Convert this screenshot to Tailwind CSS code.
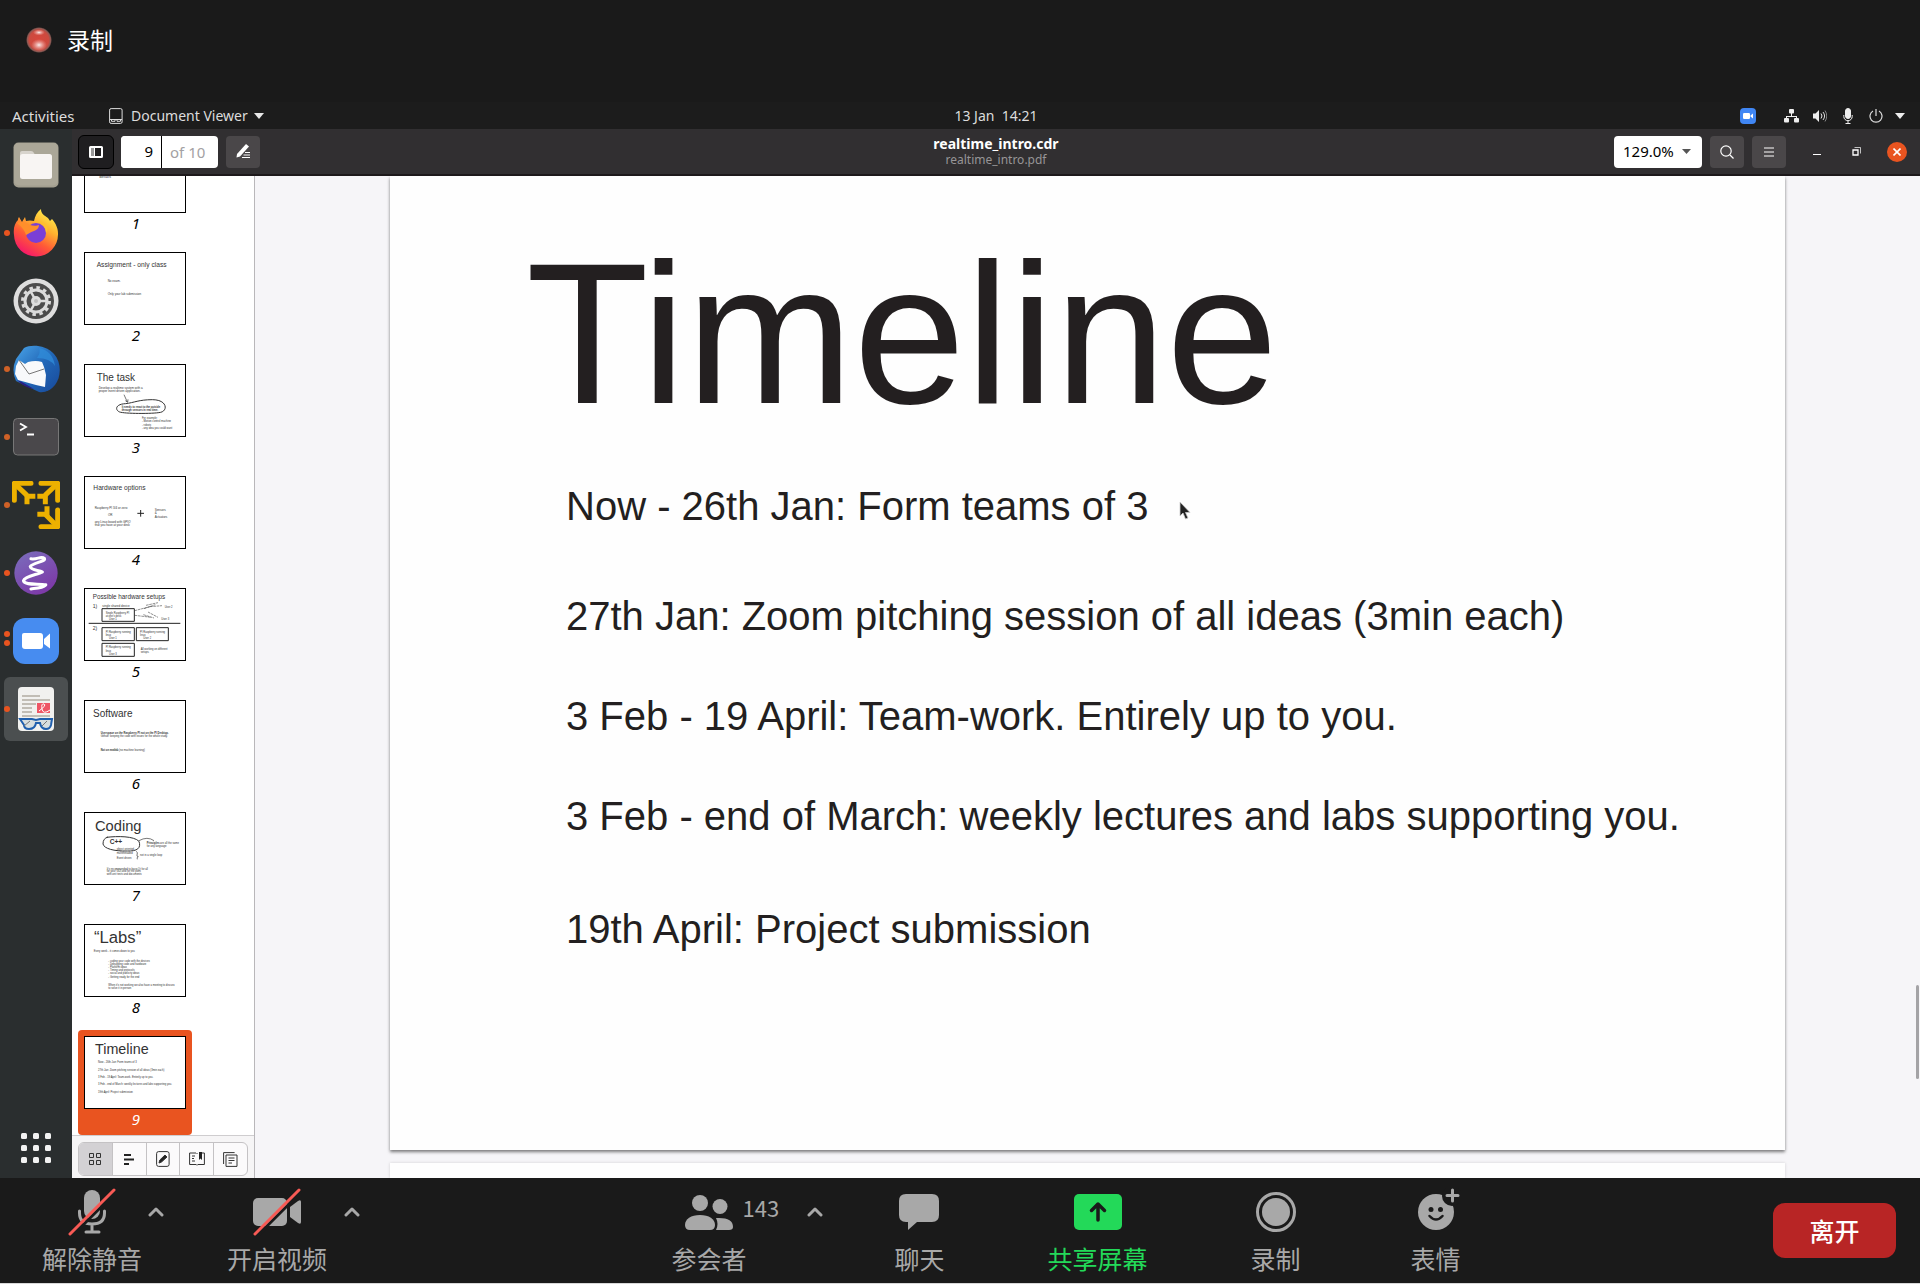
<!DOCTYPE html>
<html lang="zh-CN">
<head>
<meta charset="utf-8">
<title>realtime_intro.pdf</title>
<script src="https://cdn.jsdelivr.net/npm/@tailwindcss/browser@4"></script>
</head>
<body class="flex h-screen flex-col overflow-hidden bg-[#1a1a1a] font-['Noto_Sans','Noto_Sans_CJK_SC',sans-serif] text-white">

<!-- Recording banner -->
<div class="flex h-[102px] shrink-0 items-start gap-[15px] pt-[23px] pl-[26px]">
  <svg class="mt-1 size-[26px]" viewBox="0 0 26 26" aria-hidden="true">
    <defs>
      <radialGradient id="rec"><stop offset="0" stop-color="#d8473c"/><stop offset=".75" stop-color="#cc4a3f"/><stop offset=".9" stop-color="#8e5a54"/><stop offset="1" stop-color="#1a1a1a"/></radialGradient>
      <radialGradient id="glow"><stop offset="0" stop-color="#fff" stop-opacity=".9"/><stop offset="1" stop-color="#f6b5ae" stop-opacity="0"/></radialGradient>
    </defs>
    <circle cx="13" cy="13" r="13" fill="url(#rec)"/>
    <ellipse cx="13" cy="5.500" rx="6" ry="3" fill="url(#glow)"/>
    <ellipse cx="13" cy="18" rx="8" ry="6" fill="url(#glow)"/>
  </svg>
  <span class="font-['Noto_Sans_CJK_SC',sans-serif] text-[23px] leading-8">录制</span>
</div>

<!-- Desktop top bar -->
<header class="grid h-[27px] shrink-0 grid-cols-[72px_1fr_auto_1fr] items-center bg-[#1c1c1c] text-sm text-[#dcdcdc]">
  <button class="pl-3 text-left text-[15px] leading-5 whitespace-nowrap">Activities</button>
  <button class="flex items-center gap-2 pl-[37px]">
    <svg class="h-4 w-[14px]" viewBox="0 0 14 16" fill="none" stroke="#ddd" aria-hidden="true"><rect x=".6" y=".6" width="12.500" height="14.800" rx="1.500"/><path d="M1 11.500h12"/><path d="M2.500 11.500v1.800h3.500v-1.800M8 11.500v1.800h3.500v-1.800"/></svg>
    <span>Document Viewer</span>
    <svg class="-ml-[2px] h-[6px] w-[10px]" viewBox="0 0 10 6" aria-hidden="true"><path d="M0 0h10L5 6z" fill="#e8e8e8"/></svg>
  </button>
  <time class="whitespace-pre">13 Jan  14:21</time>
  <div class="flex items-center justify-end pr-[15px]">
    <svg class="mr-[28px] size-4" viewBox="0 0 16 16" aria-hidden="true"><rect width="16" height="16" rx="4" fill="#4086f4"/><rect x="3" y="5" width="7" height="6" rx="1.200" fill="#fff"/><path d="M10.500 7.500L13 5.500v5l-2.500-2z" fill="#fff"/></svg>
    <svg class="mr-[14px] h-[14px] w-[15px]" viewBox="0 0 15 14" fill="#eee" aria-hidden="true"><rect x="5" y="0" width="5" height="4.500" rx="1"/><rect x="0" y="9" width="5" height="4.500" rx="1"/><rect x="10" y="9" width="5" height="4.500" rx="1"/><path d="M7 4h1v3h5v2.500h-1V8H3v1.500H2V7h5z"/></svg>
    <svg class="mr-4 size-[14px]" viewBox="0 0 14 14" fill="none" stroke="#eee" aria-hidden="true"><path d="M0 4.500h2.500L6 1v12L2.500 9.500H0z" fill="#eee" stroke="none"/><path d="M8 4.500q2 2.500 0 5"/><path d="M10 3q3.200 4 0 8" opacity=".9"/><path d="M12 1.500q3.500 5.500 0 11" opacity=".5"/></svg>
    <svg class="mr-4 h-4 w-[10px]" viewBox="0 0 10 16" fill="none" stroke="#eee" aria-hidden="true"><rect x="2.500" y=".5" width="5" height="10" rx="2.500" fill="#eee"/><path d="M.8 7v1.500a4.200 4.200 0 0 0 8.400 0V7M5 13v2.500M2.500 15.500h5"/></svg>
    <svg class="mr-3 size-[14px]" viewBox="0 0 14 14" fill="none" stroke="#ddd" stroke-width="1.200" aria-hidden="true"><path d="M4 2a6 6 0 1 0 6 0M7 0v7"/></svg>
    <svg class="h-[6px] w-[10px]" viewBox="0 0 10 6" aria-hidden="true"><path d="M0 0h10L5 6z" fill="#eee"/></svg>
  </div>
</header>

<div class="flex min-h-0 flex-1">
  <!-- Dock -->
  <nav class="flex w-[72px] shrink-0 flex-col items-center gap-1 bg-[#2a2e2f] pt-1" aria-label="Dock">
    <button class="flex size-16 items-center justify-center" aria-label="Files">
      <svg class="size-[46px]" viewBox="0 0 46 46"><rect x=".5" y=".5" width="45" height="45" rx="5" fill="#a39f90"/><rect x="1" y="1" width="44" height="42.500" rx="5" fill="#aba798"/><path d="M7 14v-3q0-2 2-2h9q2 0 3 2l1 2z" fill="#d8d4cd"/><rect x="7" y="12" width="32" height="25" rx="2.500" fill="#f8f5f3"/></svg>
    </button>
    <button class="relative flex size-16 items-center justify-center" aria-label="Firefox">
      <i class="absolute left-0 size-[6px] rounded-full bg-[#e95420]"></i>
      <svg class="size-[48px]" viewBox="0 0 48 48"><defs><linearGradient id="ff" x1=".85" y1=".05" x2=".3" y2="1"><stop offset="0" stop-color="#fff44f"/><stop offset=".35" stop-color="#ffb02e"/><stop offset=".65" stop-color="#ff5a36"/><stop offset="1" stop-color="#f5156c"/></linearGradient></defs><path d="M2 26C1 19 3 14 6 11q0-2 1-3l3 5 3-5 1 4q4-1 8 0c1-5 3-9 7-12 0 5 3 6 7 9l2 3 2-2c4 5 6 9 6 15a22 22 0 0 1-44 1z" fill="url(#ff)"/><circle cx="24" cy="24" r="10" fill="#7a3fd6"/><path d="M5 14c4-2 9-1 13 2 3 1 7 1 9 0 0 3-2 5-5 6-4 1-5 3-8 4-1-4-4-8-9-12z" fill="#ff8f2b"/><path d="M22 12c7-1 12 5 12 12 4-6 1-13-12-12z" fill="#ffc02f"/></svg>
    </button>
    <button class="flex size-16 items-center justify-center" aria-label="Settings">
      <svg class="size-[46px]" viewBox="0 0 46 46" fill="none"><circle cx="23" cy="23" r="22.500" fill="#dedede"/><circle cx="23" cy="23" r="18" fill="#4c4c4c"/><circle cx="23" cy="23" r="11" stroke="#dcdcdc" stroke-width="3"/><circle cx="23" cy="23" r="13.500" stroke="#dcdcdc" stroke-width="3" stroke-dasharray="3.500 3.568"/><circle cx="23" cy="23" r="5" fill="#dcdcdc"/><path d="M23 23l-5-9M23 23h11M23 23l-5 9" stroke="#dcdcdc" stroke-width="2.500"/><circle cx="23" cy="23" r="2" fill="#bbb"/></svg>
    </button>
    <button class="relative flex size-16 items-center justify-center" aria-label="Thunderbird">
      <i class="absolute left-0 size-[6px] rounded-full bg-[#cf6127]"></i>
      <svg class="size-[48px]" viewBox="0 0 48 48"><defs><linearGradient id="tb" x1="0" y1="0" x2="1" y2="1"><stop offset="0" stop-color="#4ba6ea"/><stop offset=".5" stop-color="#2268b8"/><stop offset="1" stop-color="#17489a"/></linearGradient></defs><path d="M12 3C19-1 34 0 42 9c8 9 7 23 1 31-4 5-10 8-16 7L4 36Q-1 25 4 14z" fill="url(#tb)"/><path d="M27 3q14 3 16 18-5-8-18-8 4-6 2-10z" fill="#2f8bd8" opacity=".8"/><path d="M5 35q8 8 17 9L10 37z" fill="#2a1e86"/><path d="M7 15l6 4 3-2q8-2 14 0l2 5 2 8-1 12-9-2-18-5-3-6 1-8z" fill="#f8f9fb"/><path d="M7 15l10 14 15-5" fill="none" stroke="#666" stroke-width=".9"/></svg>
    </button>
    <button class="relative flex size-16 items-center justify-center" aria-label="Terminal">
      <i class="absolute left-0 size-[6px] rounded-full bg-[#cf6127]"></i>
      <svg class="h-[38px] w-[46px]" viewBox="0 0 46 38"><rect x=".5" y=".5" width="45" height="36.500" rx="4" fill="#4a484b" stroke="#777"/><path d="M7 5.500l6 3.500-6 3.500M14 16.500h7" fill="none" stroke="#fff" stroke-width="1.800"/></svg>
    </button>
    <button class="relative flex size-16 items-center justify-center" aria-label="VMware">
      <i class="absolute left-0 size-[6px] rounded-full bg-[#cf6127]"></i>
      <svg class="size-[48px]" viewBox="0 0 144 144" fill="none" stroke="#edb100" stroke-width="15"><g stroke-linecap="round" stroke-linejoin="round"><path d="M7 58V7h50M87 7h50v51M137 87v50H87"/></g><path d="M7 7l38 36M137 7L99 43M137 137l-36-36"/><path d="M70 46H45v24M76 46h24v24M105 76v24H76"/></svg>
    </button>
    <button class="relative flex size-16 items-center justify-center" aria-label="Emacs">
      <i class="absolute left-0 size-[6px] rounded-full bg-[#e95420]"></i>
      <svg class="size-11" viewBox="0 0 130 130"><defs><linearGradient id="em" x1="0" y1="0" x2=".6" y2="1"><stop offset="0" stop-color="#7a6fbd"/><stop offset="1" stop-color="#7d3aa8"/></linearGradient></defs><circle cx="65" cy="65" r="64" fill="url(#em)"/><path d="M50 23C68 26 80 14 90 22 94 32 56 34 48 46 50 58 74 56 84 62 70 70 32 74 28 88 32 102 72 96 94 100 84 110 66 110 50 112" fill="none" stroke="#fff" stroke-width="9" stroke-linecap="round" stroke-linejoin="round"/></svg>
    </button>
    <button class="relative flex size-16 items-center justify-center" aria-label="Zoom">
      <i class="absolute top-[22px] left-0 size-[6px] rounded-full bg-[#e95420]"></i>
      <i class="absolute top-[31px] left-0 size-[6px] rounded-full bg-[#e95420]"></i>
      <svg class="size-[46px]" viewBox="0 0 46 46"><rect width="46" height="46" rx="12" fill="#478cf0"/><path d="M11 15h16q3 0 3 3v10q0 3-3 3H12q-3 0-3-3V17q0-2 2-2z" fill="#fff"/><path d="M31 21l6-5.500v15L31 26z" fill="#fff"/></svg>
    </button>
    <button class="relative flex size-16 items-center justify-center rounded-md bg-[#4b4f50]" aria-label="Document Viewer">
      <i class="absolute left-0 size-[6px] rounded-full bg-[#e95420]"></i>
      <svg class="h-[46px] w-[38px]" viewBox="0 0 38 46"><rect x="1" y="1" width="36" height="44" rx="4" fill="#f1f1ef"/><path d="M5 10h18M5 14h28M5 18h14M5 22h10M5 26h10M5 30h28" stroke="#b1aca2" stroke-width="1.600"/><rect x="20" y="17" width="13" height="10" fill="#ee5565"/><path d="M22 25q8-6 5-7t-2 5 8 1" fill="none" stroke="#fff"/><path d="M3 33h12l4 1 4-1h12l-1 6q-1 4-5 4-5 0-6-6h-4q-1 6-7 6-5 0-5-4z" fill="#d7dedf" stroke="#1f5fae" stroke-width="2"/><path d="M7 40l6-5M25 40l5-5" stroke="#777"/></svg>
    </button>
    <button class="mt-auto mb-[15px]" aria-label="Show applications">
      <svg class="size-[30px]" viewBox="0 0 30 30" fill="#f2f2f2"><rect width="6" height="6" rx="1.500"/><rect x="12" width="6" height="6" rx="1.500"/><rect x="24" width="6" height="6" rx="1.500"/><rect y="12" width="6" height="6" rx="1.500"/><rect x="12" y="12" width="6" height="6" rx="1.500"/><rect x="24" y="12" width="6" height="6" rx="1.500"/><rect y="24" width="6" height="6" rx="1.500"/><rect x="12" y="24" width="6" height="6" rx="1.500"/><rect x="24" y="24" width="6" height="6" rx="1.500"/></svg>
    </button>
  </nav>

  <!-- Document viewer window -->
  <div class="flex min-w-0 flex-1 flex-col">
    <div class="grid h-[47px] shrink-0 grid-cols-[1fr_auto_1fr] items-center border-b-2 border-[#1d191b] bg-[#312f31]">
      <div class="flex items-center pl-[6px]">
        <button class="mr-[7px] flex h-[34px] w-9 items-center justify-center rounded-md border border-black bg-[#1f1e20]" aria-label="Side pane">
          <svg class="h-3 w-[14px]" viewBox="0 0 14 12"><rect x="1" y="1" width="12" height="10" rx=".5" fill="none" stroke="#fff" stroke-width="2"/><rect x="2" y="2" width="3" height="8" fill="#999"/><path d="M5.500 1v10" stroke="#fff"/></svg>
        </button>
        <div class="mr-2 flex h-8 overflow-hidden rounded bg-white text-[15px]">
          <input class="w-[41px] border-r border-black bg-white pr-2 text-right text-black" value="9" aria-label="Page">
          <span class="w-14 pl-2 leading-8 text-[#a3a1a3]">of 10</span>
        </div>
        <button class="flex h-8 w-[34px] items-center justify-center rounded bg-[#4a4749]" aria-label="Annotate">
          <svg class="size-[15px]" viewBox="0 0 15 15" fill="#fff"><path d="M1 10L10 0l3 2.500L4 12.500l-3.500 1z"/><path d="M9 8.500h5M7.500 11h6.500M6 13.500h8" stroke="#fff"/></svg>
        </button>
      </div>
      <div class="flex flex-col text-center">
        <b class="text-sm leading-4 font-bold">realtime_intro.cdr</b>
        <span class="text-xs leading-4 text-[#979597]">realtime_intro.pdf</span>
      </div>
      <div class="flex items-center justify-end pr-[13px]">
        <div class="relative mr-2 flex items-center">
          <select class="h-8 w-[88px] appearance-none rounded bg-white pl-[9px] text-[15px] text-black" aria-label="Zoom level"><option>129.0%</option></select>
          <svg class="pointer-events-none absolute right-[11px] h-[5px] w-[9px]" viewBox="0 0 9 5" aria-hidden="true"><path d="M0 0h9L4.500 5z" fill="#555"/></svg>
        </div>
        <button class="mr-2 flex h-8 w-[34px] items-center justify-center rounded bg-[#4a4749]" aria-label="Find"><svg class="size-[14px]" viewBox="0 0 14 14" fill="none" stroke="#fff" stroke-width="1.200"><circle cx="6" cy="6" r="5.200"/><path d="M10 10l3.500 3.500"/></svg></button>
        <button class="mr-[26px] flex h-8 w-[34px] items-center justify-center rounded bg-[#4a4749]" aria-label="Menu"><svg class="h-[10px] w-[10px]" viewBox="0 0 10 10" stroke="#fff"><path d="M0 1h10M0 5h10M0 9h10"/></svg></button>
        <button class="mr-[30px] flex h-5 w-[10px] items-center" aria-label="Minimize"><svg class="mt-[6px] h-1 w-[10px]" viewBox="0 0 10 4"><path d="M1 1.500h8" stroke="#fff"/></svg></button>
        <button class="mr-[26px]" aria-label="Restore"><svg class="size-[9px]" viewBox="0 0 9 9" fill="none" stroke="#fff"><path d="M1 3h5v5H1z" stroke-width="1.300"/><path d="M2.500.5h6v6" opacity=".7"/></svg></button>
        <button class="flex size-5 items-center justify-center rounded-full bg-[#e95420]" aria-label="Close"><svg class="size-2" viewBox="0 0 8 8" stroke="#fff" stroke-width="1.600"><path d="M.5.5l7 7M7.500.5l-7 7"/></svg></button>
      </div>
    </div>

    <div class="flex min-h-0 flex-1">
      <!-- Thumbnail pane -->
      <aside class="flex w-[183px] shrink-0 flex-col border-r border-[#b9b7ba] bg-white text-black">
        <div class="flex min-h-0 flex-1 flex-col justify-end gap-[7px] overflow-hidden pl-[6px] text-[15px] leading-5 italic [&_span]:pl-[2px] [&_svg]:font-['Liberation_Sans',Arial,sans-serif] [&_svg]:not-italic">
          <button class="flex h-[105px] w-[114px] shrink-0 flex-col items-center pt-[6px]">
            <svg class="h-[73px] w-[102px]" viewBox="0 0 306 219" fill="#333" font-size="9"><rect x="1.500" y="1.500" width="303" height="216" fill="#fff" stroke="#000" stroke-width="3"/><text x="46" y="114" font-size="12">details</text></svg>
            <span>1</span>
          </button>
          <button class="flex h-[105px] w-[114px] shrink-0 flex-col items-center pt-[6px]">
            <svg class="h-[73px] w-[102px]" viewBox="0 0 306 219" fill="#333" font-size="9"><rect x="1.500" y="1.500" width="303" height="216" fill="#fff" stroke="#000" stroke-width="3"/><text x="38" y="46" font-size="20">Assignment - only class</text><text x="71" y="90">No exam.</text><text x="71" y="129">Only your lab submission</text></svg>
            <span>2</span>
          </button>
          <button class="flex h-[105px] w-[114px] shrink-0 flex-col items-center pt-[6px]">
            <svg class="h-[73px] w-[102px]" viewBox="0 0 306 219" fill="#333" font-size="8"><rect x="1.500" y="1.500" width="303" height="216" fill="#fff" stroke="#000" stroke-width="3"/><text x="38" y="51" font-size="30">The task</text><text x="44" y="76" font-size="9">Develop a realtime system with a</text><text x="44" y="85" font-size="9">proper event driven application.</text><path d="M120 92l10 22m-6-4l7 5 1-9" fill="none" stroke="#333" stroke-width="2"/><path d="M125 119C150 116 165 107 205 107 250 107 252 140 230 145 205 150 120 149 107 144 92 138 94 120 125 119z" fill="none" stroke="#333" stroke-width="3"/><g font-weight="bold"><text x="113" y="132">It needs to react to the outside</text><text x="113" y="141">through sensors in real time.</text></g><text x="174" y="164">For example:</text><text x="174" y="175">- Motion control machine</text><text x="174" y="185">- robots</text><text x="174" y="196">- any idea you could want</text></svg>
            <span>3</span>
          </button>
          <button class="flex h-[105px] w-[114px] shrink-0 flex-col items-center pt-[6px]">
            <svg class="h-[73px] w-[102px]" viewBox="0 0 306 219" fill="#333" font-size="9"><rect x="1.500" y="1.500" width="303" height="216" fill="#fff" stroke="#000" stroke-width="3"/><text x="28" y="43" font-size="20">Hardware options</text><text x="32" y="99">Raspberry PI 3/4 or zero</text><text x="72" y="120">OR</text><text x="32" y="141">any Linux board with GPIO</text><text x="32" y="150">that you have at your desk</text><path d="M160 112h20M170 102v20" stroke="#222" stroke-width="3"/><text x="212" y="105">Sensors</text><text x="212" y="114">&amp;</text><text x="212" y="127">Actuators</text></svg>
            <span>4</span>
          </button>
          <button class="flex h-[105px] w-[114px] shrink-0 flex-col items-center pt-[6px]">
            <svg class="h-[73px] w-[102px]" viewBox="0 0 306 219" fill="#333" font-size="8"><rect x="1.500" y="1.500" width="303" height="216" fill="#fff" stroke="#000" stroke-width="3"/><text x="26" y="33" font-size="19">Possible hardware setups</text><text x="26" y="60" font-size="15">1)</text><text x="26" y="127" font-size="15">2)</text><text x="55" y="58" font-size="9">single shared device</text><g fill="none" stroke="#222" stroke-width="3"><path d="M54 62h97v38H54zM14 106h275M54 119h97v39H54zM157 119h96v39h-96zM54 166h97v39H54z"/><path d="M152 68l46-12M152 82l50 6M180 62l34-12m-28 2l36-8m-30 28l30 16m-44-8l32 10M198 56l36-3" stroke-width="1.500" stroke-dasharray="8 2"/></g><text x="65" y="77">Single Raspberry PI</text><text x="65" y="87">at one's desk</text><text x="75" y="97">User 1</text><text x="242" y="60">User 2</text><text x="232" y="96">User 3</text><text x="65" y="134">PI Raspberry running</text><text x="65" y="144">linux</text><text x="75" y="154">User 1</text><text x="168" y="134">PI Raspberry running</text><text x="168" y="144">linux</text><text x="178" y="154">User 2</text><text x="65" y="181">PI Raspberry running</text><text x="65" y="191">linux</text><text x="75" y="201">User 3</text><text x="170" y="186">All working on different</text><text x="170" y="196">setups.</text></svg>
            <span>5</span>
          </button>
          <button class="flex h-[105px] w-[114px] shrink-0 flex-col items-center pt-[6px]">
            <svg class="h-[73px] w-[102px]" viewBox="0 0 306 219" fill="#333" font-size="8"><rect x="1.500" y="1.500" width="303" height="216" fill="#fff" stroke="#000" stroke-width="3"/><text x="27" y="50" font-size="30">Software</text><text x="50" y="103" font-weight="bold">Userspace on the Raspberry PI not on the PI Desktop.</text><text x="50" y="112">Github: keeping the code with issues for the whole study.</text><text x="50" y="153"><tspan font-weight="bold">Not on matlab</tspan> (no machine learning)</text></svg>
            <span>6</span>
          </button>
          <button class="flex h-[105px] w-[114px] shrink-0 flex-col items-center pt-[6px]">
            <svg class="h-[73px] w-[102px]" viewBox="0 0 306 219" fill="#333" font-size="8"><rect x="1.500" y="1.500" width="303" height="216" fill="#fff" stroke="#000" stroke-width="3"/><text x="33" y="57" font-size="44">Coding</text><text x="77" y="97" font-size="20" font-weight="bold">C++</text><path d="M68 76C100 72 150 72 165 88 172 108 160 118 130 117 90 118 60 110 57 96 57 84 62 78 72 75" fill="none" stroke="#333" stroke-width="3"/><path d="M165 86q25-14 45 0M156 118q7 2 3 11-2 4 4 5-6 2-3 8" fill="none" stroke="#333" stroke-width="2"/><text x="98" y="114">object oriented</text><text x="98" y="126">multithreaded</text><text x="98" y="141">Event driven</text><text x="168" y="132">not in a single loop</text><text x="188" y="96"><tspan font-weight="bold">Principles</tspan> are all the same</text><text x="188" y="105">for any language</text><text x="68" y="174">It's recommended to have Qt for all</text><text x="68" y="181">for your GUI and for the plots</text><text x="68" y="189">with unit tests and documents</text></svg>
            <span>7</span>
          </button>
          <button class="flex h-[105px] w-[114px] shrink-0 flex-col items-center pt-[6px]">
            <svg class="h-[73px] w-[102px]" viewBox="0 0 306 219" fill="#333" font-size="8"><rect x="1.500" y="1.500" width="303" height="216" fill="#fff" stroke="#000" stroke-width="3"/><text x="30" y="56" font-size="50">“Labs”</text><text x="29" y="84">Every week - it comes down to you</text><text x="73" y="114">- coding your code with the devices</text><text x="73" y="123">- Debugging code and hardware</text><text x="73" y="132">- Platform ideas</text><text x="73" y="141">- Timing and protocols</text><text x="73" y="150">- social and publicity ideas</text><text x="73" y="162">- Getting ready for the end</text><text x="73" y="187">When it's not working we also have a meeting to discuss</text><text x="73" y="196">to solve it in person</text></svg>
            <span>8</span>
          </button>
          <button class="flex h-[105px] w-[114px] shrink-0 flex-col items-center rounded-sm bg-[#e95420] pt-[6px] text-white" aria-current="page">
            <svg class="h-[73px] w-[102px]" viewBox="0 0 306 219" fill="#333" font-size="8"><rect x="1.500" y="1.500" width="303" height="216" fill="#fff" stroke="#000" stroke-width="3"/><text x="33" y="54" font-size="43">Timeline</text><text x="42" y="81">Now - 26th Jan: Form teams of 3</text><text x="42" y="105">27th Jan: Zoom pitching session of all ideas (3min each)</text><text x="42" y="126">3 Feb - 19 April: Team-work. Entirely up to you.</text><text x="42" y="148">3 Feb - end of March: weekly lectures and labs supporting you.</text><text x="42" y="171">19th April: Project submission</text></svg>
            <span>9</span>
          </button>
        </div>
        <div class="h-[43px] shrink-0 border-t border-[#cfcdcf] bg-[#f6f5f6] pt-[6px] pl-[6px]">
          <div class="flex h-[34px] w-[170px] divide-x divide-[#c4c2c4] overflow-hidden rounded-md border border-[#c4c2c4] bg-[#fbfafb] [&>button]:flex [&>button]:flex-1 [&>button]:items-center [&>button]:justify-center">
            <button class="bg-[#d3d1d4]" aria-label="Thumbnails"><svg class="size-3" viewBox="0 0 12 12" fill="none" stroke="#333"><path d="M.5.5h4v4h-4zM7.500.5h4v4h-4zM.5 7.500h4v4h-4zM7.500 7.500h4v4h-4z"/></svg></button>
            <button aria-label="Outline"><svg class="h-[11px] w-[11px]" viewBox="0 0 11 11" stroke="#222" stroke-width="1.800"><path d="M0 1h7M0 5.500h10M0 10h5"/></svg></button>
            <button aria-label="Annotations"><svg class="h-4 w-[14px]" viewBox="0 0 14 16" fill="none" stroke="#333"><rect x=".6" y=".6" width="12.500" height="14.800" rx="2"/><path d="M3 12l.8-3L9 4l2 2-5.500 5z" fill="#222"/></svg></button>
            <button aria-label="Bookmarks"><svg class="h-[14px] w-4" viewBox="0 0 16 14" fill="none" stroke="#333"><path d="M7 12.500H.6V1H7M9 12.500h6.400V1H13M8 1v1m0 10v1.500M3 4h3M3 6.500h2M3 9h3"/><path d="M10 0h3v8l-1.500-1.500L10 8z" fill="#222" stroke="none"/></svg></button>
            <button aria-label="Layers"><svg class="size-[15px]" viewBox="0 0 15 15" fill="none" stroke="#333"><path d="M.6 12V.6h11M3 3h11v11.400H3zM5.500 6h6M5.500 8.500h6M5.500 11h3.500"/></svg></button>
          </div>
        </div>
      </aside>

      <!-- Page view -->
      <main class="relative flex min-w-0 flex-1 flex-col gap-[13px] overflow-hidden bg-[#f6f5f8] px-[135px] font-['Liberation_Sans',Arial,sans-serif] text-[#231f20]">
        <article class="relative min-h-0 flex-1 bg-[#fefefe] pt-[58px] pl-[136px] whitespace-nowrap shadow-[0_2px_3px_rgba(0,0,0,0.5)]">
          <h1 class="text-[201px] leading-[200px]">Timeline</h1>
          <div class="mt-12 flex flex-col pl-10 text-[40px] leading-[48px]">
            <p class="mb-[62px]">Now - 26th Jan: Form teams of 3</p>
            <p class="mb-[52px]">27th Jan: Zoom pitching session of all ideas (3min each)</p>
            <p class="mb-[52px]">3 Feb - 19 April: Team-work. Entirely up to you.</p>
            <p class="mb-[65px]">3 Feb - end of March: weekly lectures and labs supporting you.</p>
            <p>19th April: Project submission</p>
          </div>
          <svg class="absolute top-[325px] left-[789px] h-5 w-3" viewBox="0 0 12 20" aria-hidden="true"><path d="M1 1v14l3-3 2.500 6 2.500-1-2.500-5.500H11z" fill="#222" stroke="#ccc" stroke-width=".8"/></svg>
        </article>
        <article class="h-[15px] shrink-0 bg-[#fefefe] shadow-[0_0_3px_rgba(0,0,0,0.15)]"></article>
        <div class="absolute right-px bottom-[99px] h-[94px] w-[3px] rounded-full bg-[#a4a3a6]"></div>
      </main>
    </div>
  </div>
</div>

<!-- Meeting controls -->
<footer class="flex h-[106px] shrink-0 items-start border-b border-[#d8d8d8] bg-[#1a1a1a] pr-6 pl-[42px] font-['Noto_Sans_CJK_SC',sans-serif] text-[25px] leading-8 text-[#a8a8a8]">
  <button class="flex flex-col items-center gap-[6px] pt-[10px]">
    <svg class="h-[48px] w-[50px]" viewBox="0 0 50 48" fill="none" stroke="#a8a8a8" stroke-width="3"><rect x="17" y="2" width="16" height="29" rx="8" fill="#a8a8a8" stroke="none"/><path d="M12.500 23v2c0 8 5 11 12.500 11s12.500-3 12.500-11v-2M25 36v8M19 44h13" stroke-linecap="round"/><path d="M5 48L50 3" stroke="#1a1a1a" stroke-width="3"/><path d="M3 46L47 2" stroke="#f85a55" stroke-linecap="round"/></svg>
    <span>解除静音</span>
  </button>
  <button class="mt-[23px] ml-[5px] p-px" aria-label="Audio options"><svg class="h-5 w-4" viewBox="0 0 16 20" fill="none" stroke="#a8a8a8" stroke-width="3" stroke-linecap="round" stroke-linejoin="round"><path d="M2 13l6-6 6 6"/></svg></button>
  <button class="ml-[62px] flex flex-col items-center gap-[6px] pt-[10px]">
    <svg class="h-[48px] w-[50px]" viewBox="0 0 50 48" fill="#a8a8a8"><rect x="1" y="10" width="34" height="28" rx="5"/><path d="M38 19l8-6q3-2 3 1v20q0 3-3 1l-8-6z"/><path d="M5 48L50 3" stroke="#1a1a1a" stroke-width="3"/><path d="M3 46L47 2" stroke="#f85a55" stroke-width="3" stroke-linecap="round"/></svg>
    <span>开启视频</span>
  </button>
  <button class="mt-[23px] ml-4 p-px" aria-label="Video options"><svg class="h-5 w-4" viewBox="0 0 16 20" fill="none" stroke="#a8a8a8" stroke-width="3" stroke-linecap="round" stroke-linejoin="round"><path d="M2 13l6-6 6 6"/></svg></button>
  <div class="flex flex-1 items-start justify-center pr-[2px]">
    <button class="relative flex flex-col items-center gap-[6px] pt-[10px]">
      <svg class="h-[48px] w-[50px]" viewBox="0 0 50 48" fill="#a8a8a8"><circle cx="16" cy="15" r="8"/><circle cx="36" cy="18.500" r="7.500"/><path d="M1 37c0-6 6-10 15-10s15 4 15 10q0 5-5 5H6q-5 0-5-5z"/><path d="M32 30q17-1 17 9 0 3-4 3H32q3-6 0-12z"/></svg>
      <span>参会者</span>
      <span class="absolute top-[13px] left-[71px] text-[22px]">143</span>
    </button>
    <button class="mt-[23px] ml-[60px] p-px" aria-label="Participant options"><svg class="h-5 w-4" viewBox="0 0 16 20" fill="none" stroke="#a8a8a8" stroke-width="3" stroke-linecap="round" stroke-linejoin="round"><path d="M2 13l6-6 6 6"/></svg></button>
    <button class="ml-[70px] flex flex-col items-center gap-[6px] pt-[10px]">
      <svg class="h-[48px] w-[42px]" viewBox="0 0 42 48" fill="#a8a8a8"><path d="M8 6h26q7 0 7 7v14q0 7-7 7H19l-9 8V34H8q-7 0-7-7V13q0-7 7-7z"/></svg>
      <span>聊天</span>
    </button>
    <button class="ml-[103px] flex flex-col items-center gap-[6px] pt-[10px] text-[#23d959]">
      <svg class="h-[48px] w-[48px]" viewBox="0 0 48 48"><rect y="6" width="48" height="36" rx="5" fill="#23d959"/><path d="M24 32V16.500M17.500 22.500l6.500-6.500 6.500 6.500" fill="none" stroke="#1a1a1a" stroke-width="3.500" stroke-linecap="round" stroke-linejoin="round"/></svg>
      <span>共享屏幕</span>
    </button>
    <button class="ml-[103px] flex flex-col items-center gap-[6px] pt-[10px]">
      <svg class="h-[48px] w-[42px]" viewBox="0 0 42 48"><circle cx="21" cy="24" r="18.500" fill="none" stroke="#a8a8a8" stroke-width="3"/><circle cx="21" cy="24" r="14" fill="#a8a8a8"/></svg>
      <span>录制</span>
    </button>
    <button class="ml-[110px] flex flex-col items-center gap-[6px] pt-[10px]">
      <svg class="h-[48px] w-[50px]" viewBox="0 0 50 48"><circle cx="25" cy="24" r="18" fill="#a8a8a8"/><circle cx="41" cy="8" r="10" fill="#1a1a1a"/><path d="M41.500 2v11M36 7.500h11" stroke="#a8a8a8" stroke-width="3" stroke-linecap="round"/><g fill="#1a1a1a"><circle cx="20" cy="21.500" r="2.500"/><circle cx="29.500" cy="21.500" r="2.500"/></g><path d="M18.500 28q6.500 7 13 0" fill="none" stroke="#1a1a1a" stroke-width="2.500" stroke-linecap="round"/></svg>
      <span>表情</span>
    </button>
  </div>
  <button class="mt-[25px] h-[55px] w-[123px] rounded-xl bg-[#b82525] pb-[2px] font-medium text-white">离开</button>
</footer>
</body>
</html>
